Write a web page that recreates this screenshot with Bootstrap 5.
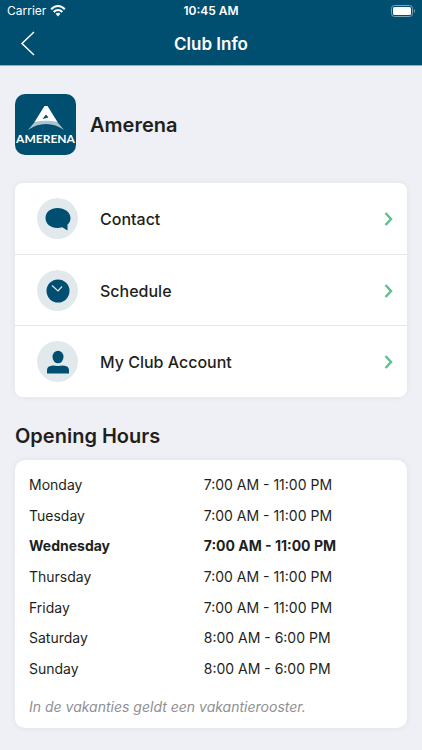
<!DOCTYPE html>
<html lang="en">
<head>
<meta charset="utf-8">
<meta name="viewport" content="width=device-width, initial-scale=1">
<title>Club Info</title>
<link href="https://cdn.jsdelivr.net/npm/bootstrap@5.3.0/dist/css/bootstrap.min.css" rel="stylesheet">
<style>
  :root { --club-blue: #014f70; }
  body { font-family: Inter, "Liberation Sans", sans-serif; background: #eff0f5; color: #1e1f21; }
  svg { display: block; }
  .app-header { background: var(--club-blue); border-bottom: 1px solid #8fb0c0; }
  .status-bar { height: 22px; padding: 0 7px; font-size: 12px; line-height: 22px; }
  .title-bar { height: 43px; padding: 0 20px; }
  .title-bar h1 { font-size: 17px; line-height: 24px; font-weight: 600; }
  .back-btn { width: 16px; height: 26px; }
  .page-body { padding: 28px 15px 22px; }
  .club-logo { width: 61px; height: 61px; border-radius: 10px; background: var(--club-blue); padding-top: 11px; margin-right: 14px; }
  .club-logo-name { font: 700 12px/16px Lato, sans-serif; }
  .club-name { font-size: 20px; line-height: 28px; font-weight: 600; }
  .panel { --bs-card-border-width: 0; --bs-card-border-radius: 10px; --bs-card-inner-border-radius: 10px; box-shadow: 0 0 6px rgba(30, 40, 70, .07); }
  .menu-row { padding: 15px 14px 14px 22px; border-color: #e4e5e8; color: #1e1f21; font-size: 16px; line-height: 24px; font-weight: 500; }
  .menu-row:first-child, .menu-row:last-child { padding-bottom: 15px; }
  .menu-icon { width: 41px; height: 41px; background: #e2e9ed; margin-right: 22px; }
  .section-title { font-size: 20px; line-height: 28px; font-weight: 600; margin: 25px 0 10px; }
  .hours-panel { padding: 10px 14px; }
  .hours { height: 214px; font-size: 14px; line-height: 20px; }
  .hours th, .hours td { padding: 0; vertical-align: middle; font-weight: 400; }
  .hours th { width: 48%; }
  .hours .today th, .hours .today td { font-weight: 700; }
  .hours-note { font-size: 14px; line-height: 20px; color: #8f9092; margin: 13px 0 1px; }
</style>
<script src="https://cdn.jsdelivr.net/npm/bootstrap@5.3.0/dist/js/bootstrap.bundle.min.js" defer></script>
</head>
<body>
<header class="app-header text-white">
  <div class="status-bar row g-0 align-items-center">
    <div class="col d-flex align-items-center gap-1">
      <span>Carrier</span>
      <svg width="16" height="12" viewBox="0 0 16 12" fill="none" stroke="#fff" stroke-width="2" role="img" aria-label="Wi-Fi"><path d="M1.200 4.400C5-.1 11-.1 14.800 4.400M3.700 7C6.200 4.200 9.800 4.200 12.300 7"/><path d="M5.600 8.700Q8 6.700 10.400 8.700L8 11.400Z" fill="#fff" stroke="none"/></svg>
    </div>
    <div class="col-auto fw-semibold">10:45 AM</div>
    <div class="col d-flex justify-content-end">
      <svg width="24" height="12" viewBox="0 0 24 12" role="img" aria-label="Battery full"><rect x=".5" y=".5" width="21" height="11" rx="3" fill="none" stroke="#7fa3b5"/><rect x="2" y="2" width="18" height="8" rx="1.500" fill="#fff"/><path d="M23 4v4q1-.5 1-2t-1-2" fill="#7fa3b5"/></svg>
    </div>
  </div>
  <div class="title-bar row g-0 align-items-center">
    <div class="col">
      <button type="button" class="back-btn btn p-0 border-0 d-block" aria-label="Back"><svg width="16" height="26" viewBox="0 0 16 26" fill="none" stroke="#fff" stroke-width="1.500"><path d="M14 1 2 12.500 14 24"/></svg></button>
    </div>
    <h1 class="col-auto m-0">Club Info</h1>
    <div class="col"></div>
  </div>
</header>

<main class="page-body">
  <div class="d-flex align-items-center mb-4 pb-1">
    <div class="club-logo text-white text-center d-flex flex-column align-items-center">
      <svg width="38" height="26" viewBox="0 0 38 26" aria-hidden="true">
        <path d="M8.500 16 19 15 29.500 16 37 25Q29 19 19 19T1 25Z" fill="#a9c3cf"/>
        <path d="M17.500 1h3L30.500 17Q25 15.800 19 15.800T7.500 17Z" fill="#fff"/>
        <path d="M19 9.500 21.500 12.500 15.500 14Z" fill="#014f70"/>
      </svg>
      <span class="club-logo-name">AMERENA</span>
    </div>
    <h2 class="club-name m-0">Amerena</h2>
  </div>

  <nav class="card panel" aria-label="Club">
    <div class="list-group list-group-flush rounded-3">
      <a href="#contact" class="menu-row list-group-item d-flex align-items-center">
        <span class="menu-icon rounded-circle d-flex align-items-center justify-content-center"><svg width="26" height="24" viewBox="0 0 26 24" fill="#014f70" aria-hidden="true"><path d="M12.500 1C5.500 1 .5 5.300.5 11s5 10 12 10q2.500 0 4.700-.7L22.500 23.500V17.500Q25.500 15 25.500 11C25.500 5.300 19.500 1 12.500 1Z"/></svg></span>
        <span class="flex-grow-1">Contact</span>
        <svg width="9" height="14" viewBox="0 0 9 14" fill="none" stroke="#63bf8d" stroke-width="2.500" aria-hidden="true"><path d="M1.500 1 7 7l-5.500 6"/></svg>
      </a>
      <a href="#schedule" class="menu-row list-group-item d-flex align-items-center">
        <span class="menu-icon rounded-circle d-flex align-items-center justify-content-center"><svg width="24" height="24" viewBox="0 0 24 24" aria-hidden="true"><circle cx="12" cy="12" r="11.500" fill="#014f70"/><path d="m6 6.500 6 5.500 4-4.500" fill="none" stroke="#e2e9ed" stroke-width="1.200"/></svg></span>
        <span class="flex-grow-1">Schedule</span>
        <svg width="9" height="14" viewBox="0 0 9 14" fill="none" stroke="#63bf8d" stroke-width="2.500" aria-hidden="true"><path d="M1.500 1 7 7l-5.500 6"/></svg>
      </a>
      <a href="#account" class="menu-row list-group-item d-flex align-items-center">
        <span class="menu-icon rounded-circle d-flex align-items-center justify-content-center"><svg width="22" height="24" viewBox="0 0 22 24" fill="#014f70" aria-hidden="true"><ellipse cx="11" cy="7" rx="5.500" ry="6.300"/><path d="M0 23.500v-3.300Q0 16 6 15.600q5 .8 10 0 6 .4 6 4.600v3.300Z"/></svg></span>
        <span class="flex-grow-1">My Club Account</span>
        <svg width="9" height="14" viewBox="0 0 9 14" fill="none" stroke="#63bf8d" stroke-width="2.500" aria-hidden="true"><path d="M1.500 1 7 7l-5.500 6"/></svg>
      </a>
    </div>
  </nav>

  <h2 class="section-title" id="hours-title">Opening Hours</h2>
  <section class="card panel hours-panel" aria-labelledby="hours-title">
    <table class="hours w-100">
      <tbody>
        <tr><th scope="row">Monday</th><td>7:00 AM - 11:00 PM</td></tr>
        <tr><th scope="row">Tuesday</th><td>7:00 AM - 11:00 PM</td></tr>
        <tr class="today"><th scope="row">Wednesday</th><td>7:00 AM - 11:00 PM</td></tr>
        <tr><th scope="row">Thursday</th><td>7:00 AM - 11:00 PM</td></tr>
        <tr><th scope="row">Friday</th><td>7:00 AM - 11:00 PM</td></tr>
        <tr><th scope="row">Saturday</th><td>8:00 AM - 6:00 PM</td></tr>
        <tr><th scope="row">Sunday</th><td>8:00 AM - 6:00 PM</td></tr>
      </tbody>
    </table>
    <p class="hours-note fst-italic" lang="nl">In de vakanties geldt een vakantierooster.</p>
  </section>
</main>
</body>
</html>
